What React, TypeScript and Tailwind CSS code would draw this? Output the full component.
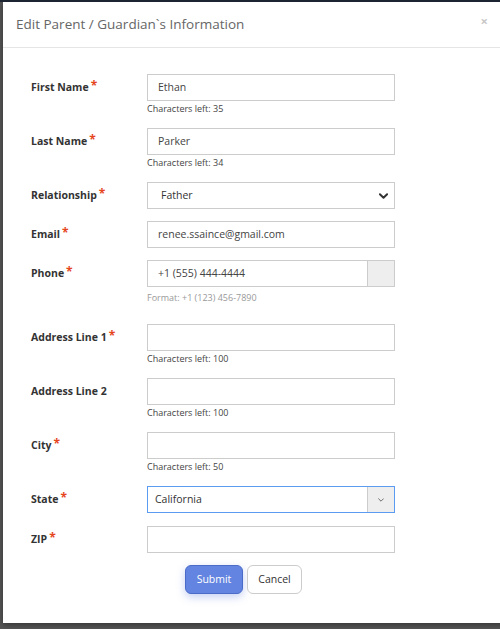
import React from 'react';

const font = "font-['Open_Sans','Liberation_Sans',sans-serif]";

function Req() {
  return <span className="ml-[2px] relative top-[-2px] text-[12px] leading-none font-bold text-[#e5461d]">*</span>;
}

function Label({ text, required }: { text: string; required?: boolean }) {
  return (
    <div className="w-[116px] h-[27px] flex items-center shrink-0 text-[10.5px] font-bold text-[#333]">
      <span>{text}</span>
      {required && <Req />}
    </div>
  );
}

function Helper({ text }: { text: string }) {
  return <div className="h-[15px] pt-[2px] text-[9px] leading-[12px] text-[#444]">{text}</div>;
}

function Chevron({ className }: { className?: string }) {
  return (
    <svg viewBox="0 0 10 6" className={className} fill="none" stroke="currentColor" strokeLinecap="round" strokeLinejoin="round">
      <path d="M1 1l4 4 4-4" />
    </svg>
  );
}

type Field = {
  label: string;
  required?: boolean;
  value?: string;
  helper?: string;
  kind?: 'text' | 'select' | 'phone' | 'state';
};

const fields: Field[] = [
  { label: 'First Name', required: true, value: 'Ethan', helper: 'Characters left: 35' },
  { label: 'Last Name', required: true, value: 'Parker', helper: 'Characters left: 34' },
  { label: 'Relationship', required: true, value: 'Father', kind: 'select' },
  { label: 'Email', required: true, value: 'renee.ssaince@gmail.com' },
  { label: 'Phone', required: true, value: '+1 (555) 444-4444', kind: 'phone' },
  { label: 'Address Line 1', required: true, helper: 'Characters left: 100' },
  { label: 'Address Line 2', helper: 'Characters left: 100' },
  { label: 'City', required: true, helper: 'Characters left: 50' },
  { label: 'State', required: true, value: 'California', kind: 'state' },
  { label: 'ZIP', required: true },
];

function Control({ field }: { field: Field }) {
  if (field.kind === 'select') {
    return (
      <div className="w-[248px] h-[27px] border border-[#ccc] flex items-center justify-between pl-[13px] pr-[6px] text-[10.5px] text-[#333]">
        <span>{field.value}</span>
        <Chevron className="w-[9px] h-[6px] text-[#333] stroke-[2.2]" />
      </div>
    );
  }
  if (field.kind === 'phone') {
    return (
      <div>
        <div className="w-[248px] h-[27px] border border-[#ccc] flex">
          <div className="flex-1 flex items-center pl-[10px] text-[10.5px] text-[#444]">{field.value}</div>
          <div className="w-[27px] bg-[#eee] border-l border-[#ccc]" />
        </div>
        <div className="h-[25px] pt-[5px] text-[9px] leading-[12px] text-[#999]">Format: +1 (123) 456-7890</div>
      </div>
    );
  }
  if (field.kind === 'state') {
    return (
      <div className="w-[248px] h-[27px] border border-[#5b9bf0] flex">
        <div className="flex-1 flex items-center pl-[7px] text-[10.5px] text-[#333]">{field.value}</div>
        <div className="w-[27px] bg-[#eee] border-l border-[#ccc] flex items-center justify-center">
          <Chevron className="w-[6px] h-[4px] text-[#555] stroke-[1.4]" />
        </div>
      </div>
    );
  }
  return (
    <div>
      <div className="w-[248px] h-[27px] border border-[#ccc] flex items-center pl-[10px] text-[10.5px] text-[#444]">
        {field.value}
      </div>
      {field.helper && <Helper text={field.helper} />}
    </div>
  );
}

export default function App() {
  return (
    <div className={`${font} w-[500px] h-[629px] overflow-hidden bg-[#565656] border-t-2 border-[#1c2431] pl-[3px]`}>
      <div className="w-[510px] h-[621px] bg-white shadow-[0_2px_6px_rgba(0,0,0,0.4)]">
        <div className="h-[46px] border-b border-[#e5e5e5] flex items-center justify-between pl-[13px] pr-[25px]">
          <h1 className="text-[13.5px] font-normal text-[#666]">Edit Parent / Guardian`s Information</h1>
          <span className="relative top-[-3px] text-[13px] font-bold leading-none text-[#c8c8c8]">×</span>
        </div>
        <div className="pl-[28px] pt-[26px]">
          {fields.map((f) => (
            <div key={f.label} className={`flex ${f.kind === 'state' ? 'mb-[13px]' : 'mb-[12px]'}`}>
              <Label text={f.label} required={f.required} />
              <Control field={f} />
            </div>
          ))}
          <div className="flex gap-[4px] ml-[154px] mt-[1px]">
            <button className="w-[58px] h-[29px] rounded-[6px] bg-[#6384e0] border border-[#4a6bc8] text-white text-[10.5px] font-medium shadow-[0_3px_8px_rgba(90,120,220,0.35)]">
              Submit
            </button>
            <button className="w-[55px] h-[29px] rounded-[6px] bg-white border border-[#ccc] text-[#333] text-[10.5px]">
              Cancel
            </button>
          </div>
        </div>
      </div>
    </div>
  );
}
